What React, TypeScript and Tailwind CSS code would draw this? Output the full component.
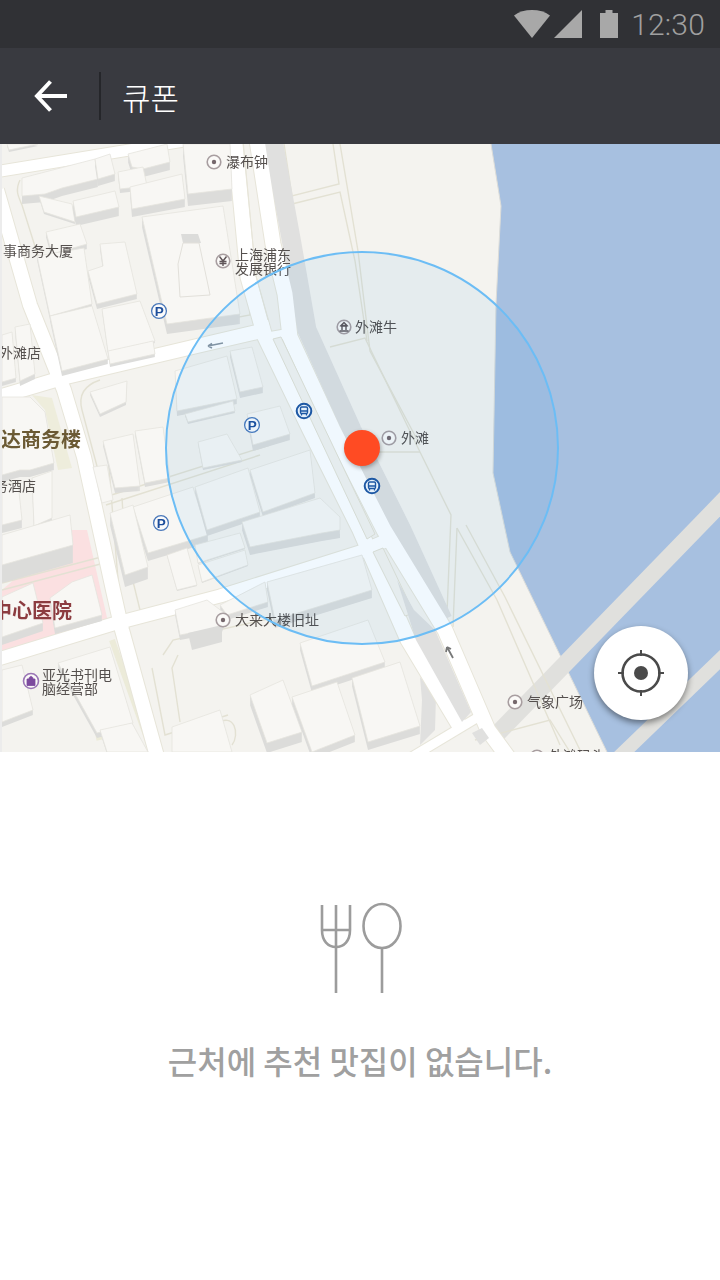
import React from "react";

type Pt = [number, number];
type Bld = { p: Pt[]; h: number };

const buildings: Bld[] = [
  { p: [[7,144],[38,144],[9,150]], h: 2 },
  { p: [[128,154],[167,144],[170,162],[143,169],[132,167]], h: 8 },
  { p: [[22,178],[95,159],[98,179],[62,188],[45,194],[22,196]], h: 8 },
  { p: [[95,159],[110,154],[115,174],[98,179]], h: 7 },
  { p: [[118,172],[143,167],[147,186],[120,189]], h: 4 },
  { p: [[130,187],[182,174],[185,199],[132,209]], h: 8 },
  { p: [[183,144],[230,144],[232,189],[188,194]], h: 12 },
  { p: [[39,196],[72,204],[75,222],[44,212]], h: 2 },
  { p: [[73,201],[115,191],[119,207],[76,217]], h: 9 },
  { p: [[46,232],[80,224],[87,244],[52,254]], h: 5 },
  { p: [[142,217],[223,206],[240,314],[167,324]], h: 10 },
  { p: [[88,271],[103,266],[100,244],[125,242],[137,294],[97,304]], h: 5 },
  { p: [[37,256],[84,248],[92,304],[50,316]], h: 4 },
  { p: [[50,316],[92,306],[108,359],[62,371]], h: 5 },
  { p: [[102,309],[140,301],[155,341],[108,352]], h: 2 },
  { p: [[108,351],[153,341],[155,354],[110,364]], h: 3 },
  { p: [[15,327],[30,324],[35,374],[20,381]], h: 5 },
  { p: [[2,335],[12,332],[16,378],[2,382]], h: 4 },
  { p: [[90,392],[127,381],[126,402],[100,414]], h: 3 },
  { p: [[175,371],[227,356],[237,399],[177,411]], h: 5 },
  { p: [[230,351],[252,347],[263,387],[240,392]], h: 6 },
  { p: [[185,414],[233,401],[235,411],[188,422]], h: 2 },
  { p: [[247,414],[280,406],[290,434],[253,445]], h: 6 },
  { p: [[198,442],[227,434],[242,460],[203,468]], h: 2 },
  { p: [[135,431],[163,427],[170,478],[145,483]], h: 4 },
  { p: [[103,441],[133,434],[140,486],[115,488]], h: 5 },
  { p: [[133,507],[193,487],[208,535],[148,553]], h: 8 },
  { p: [[110,513],[133,505],[148,567],[125,575]], h: 12 },
  { p: [[195,487],[248,468],[260,512],[207,530]], h: 6 },
  { p: [[250,470],[310,450],[315,493],[263,512]], h: 5 },
  { p: [[242,522],[320,498],[340,517],[340,530],[322,533],[250,547]], h: 8 },
  { p: [[195,545],[240,533],[245,548],[198,563]], h: 1 },
  { p: [[198,565],[245,550],[248,565],[202,582]], h: 1 },
  { p: [[167,555],[187,548],[197,585],[177,590]], h: 1 },
  { p: [[267,582],[362,555],[372,590],[275,620]], h: 8 },
  { p: [[220,605],[265,582],[268,602],[227,615]], h: 5 },
  { p: [[175,610],[207,600],[227,615],[222,627],[180,635]], h: 5 },
  { p: [[300,643],[368,620],[385,662],[312,686]], h: 7 },
  { p: [[250,695],[283,680],[302,732],[267,743]], h: 10 },
  { p: [[292,697],[337,682],[355,735],[312,752]], h: 7 },
  { p: [[352,678],[400,662],[420,726],[368,742]], h: 8 },
  { p: [[172,727],[220,710],[232,752],[172,752]], h: 2 },
  { p: [[2,397],[30,397],[45,412],[54,463],[30,470],[20,470],[2,475]], h: 7 },
  { p: [[32,478],[52,471],[52,518],[34,526]], h: 7 },
  { p: [[2,485],[18,482],[22,520],[2,525]], h: 8 },
  { p: [[2,535],[70,515],[73,545],[2,565]], h: 18 },
  { p: [[2,597],[33,583],[43,623],[2,637]], h: 8 },
  { p: [[72,582],[92,575],[102,615],[55,628],[50,598]], h: 6 },
  { p: [[2,670],[22,665],[33,710],[2,722]], h: 5 },
  { p: [[58,663],[110,647],[133,723],[97,733]], h: 5 },
  { p: [[100,730],[132,723],[148,752],[107,752]], h: 2 },
  { p: [[93,467],[107,465],[113,500],[102,503]], h: 0 },
];

const pts = (p: Pt[]) => p.map(([x, y]) => `${x},${y}`).join(" ");
const shadowPath = (p: Pt[], h: number) => {
  let d = "";
  for (let i = 1; i <= h; i++) {
    d += "M" + p.map(([x, y]) => `${x} ${y + i}`).join("L") + "Z";
  }
  return d;
};

const roads: { d: string; w: number }[] = [
  { d: "M-3 190L30 305L64 390L84 457L113 590L122 630L158 760", w: 14 },
  { d: "M-5 172L190 140", w: 11 },
  { d: "M-5 398L62 378L197 346L270 329", w: 14 },
  { d: "M-5 660L113 624L220 596L360 552L392 538", w: 13 },
  { d: "M235 140L248 277L265 337L310 430L360 530L408 640L462 730", w: 15 },
  { d: "M257 140L273 244L285 294L290 337L333 430L384 530L445 630L488 730L510 760", w: 15 },
  { d: "M262 338L296 332", w: 9 },
  { d: "M410 758L480 716", w: 9 },
];

const blockLines: string[] = [
  "M284 144L292 196L339 184L333 144",
  "M292 204L340 192L355 261L367 341",
  "M340 144L358 251L370 351L420 445",
  "M330 347L365 338L420 452L451 515L447 613",
  "M457 528L453 627",
  "M457 528L497 600L560 745",
  "M466 525L505 597L580 750",
  "M378 452L420 452",
  "M20 180C15 190 18 196 22 205L38 256",
  "M100 380C85 385 78 395 82 410L98 470",
  "M102 498L270 445",
  "M106 505L260 455",
  "M122 498L127 575",
  "M122 630L108 455",
  "M163 655L173 640L300 612L355 590",
  "M178 655L172 668L180 722",
  "M152 668L165 735L228 715",
  "M215 725C235 710 240 735 232 745",
  "M475 740L550 720L570 752",
  "M235 145L250 315L170 330",
  "M118 520L140 610",
  "M2 590L108 562",
  "M2 583L105 556",
  "M60 360L78 440",
];

const Poi = ({ x, y, glyph }: { x: number; y: number; glyph?: "bank" | "yen" }) => (
  <g>
    <circle cx={x} cy={y} r="6.8" fill="#fbfaf8" stroke="#a89ea0" strokeWidth="1.6" />
    {glyph === undefined && <circle cx={x} cy={y} r="2.2" fill="#75686c" />}
    {glyph === "yen" && (
      <path d={`M${x - 3.5} ${y - 4.5}L${x} ${y}L${x + 3.5} ${y - 4.5}M${x} ${y}V${y + 5}M${x - 3.5} ${y + 0.5}H${x + 3.5}M${x - 3.5} ${y + 2.5}H${x + 3.5}`} stroke="#5f5558" strokeWidth="1.4" fill="none" />
    )}
    {glyph === "bank" && (
      <path d={`M${x - 4.5} ${y + 4}H${x + 4.5}M${x - 3.5} ${y - 1}H${x + 3.5}M${x} ${y - 4.5}L${x - 3} ${y - 1.5}H${x + 3}ZM${x - 2} ${y - 1}V${y + 3}M${x + 2} ${y - 1}V${y + 3}`} stroke="#5f5558" strokeWidth="1.4" fill="none" />
    )}
  </g>
);

const Parking = ({ x, y }: { x: number; y: number }) => (
  <g>
    <circle cx={x} cy={y} r="7.4" fill="#fbfbfb" stroke="#4a78ba" strokeWidth="1.3" />
    <text x={x + 0.2} y={y + 4.8} textAnchor="middle" fontSize="13.5" fontWeight="700" fill="#1d4e9b" fontFamily="'Liberation Sans', sans-serif">P</text>
  </g>
);

const Bus = ({ x, y }: { x: number; y: number }) => (
  <g>
    <circle cx={x} cy={y} r="7.3" fill="#f5f8fc" stroke="#1f55a0" strokeWidth="2" />
    <rect x={x - 3.5} y={y - 4} width="7" height="6.5" rx="1.2" fill="none" stroke="#1f55a0" strokeWidth="1.4" />
    <path d={`M${x - 3.5} ${y}H${x + 3.5}M${x - 2.5} ${y + 2.5}V${y + 4.5}M${x + 2.5} ${y + 2.5}V${y + 4.5}`} stroke="#1f55a0" strokeWidth="1.3" />
  </g>
);

const labelFont = "'Noto Sans CJK SC', 'Noto Sans', sans-serif";

const Label = ({ x, y, children, size = 14, fill = "#55504e", bold = false }: { x: number; y: number; children: string; size?: number; fill?: string; bold?: boolean }) => (
  <text x={x} y={y} fontSize={size} fill={fill} fontWeight={bold ? 700 : 400} fontFamily={labelFont}>
    {children}
  </text>
);

const MapDrawing = () => (
  <svg viewBox="0 144 720 608" className="block w-full h-full blur-[0.35px]" xmlns="http://www.w3.org/2000/svg">
    <rect x="0" y="144" width="720" height="608" fill="#f4f3ef" />
    <polygon points="491,144 720,144 720,752 607,752 510,552 493,473 496,304 501,206" fill="#a7c0e0" />
    <path d="M491 144L501 206L496 304L493 473L510 552L607 752" fill="none" stroke="#dcdcd8" strokeWidth="1" />
    <path d="M730 494L498 733" stroke="#e0e0dd" strokeWidth="17" fill="none" />
    <path d="M730 650L618 758" stroke="#e0e0dd" strokeWidth="14" fill="none" />

    <polygon points="2,590 72,530 87,530 108,622 2,660" fill="#fbe0e1" />
    <polygon points="32,395 52,398 72,468 58,470 45,410" fill="#eeeddc" />
    <polygon points="18,453 27,470 22,472" fill="#eeeddc" />
    <path d="M112 640L152 752" stroke="#ecebd9" strokeWidth="6" fill="none" />
    <path d="M92 700L100 740" stroke="#ecebd9" strokeWidth="7" fill="none" />

    {blockLines.map((d, i) => (
      <path key={i} d={d} fill="none" stroke="#e3e1d3" strokeWidth="1.4" />
    ))}

    <polygon points="420,677 436,697 435,730 420,745 422,700" fill="#e0e0df" />

    {roads.map((r, i) => (
      <path key={i} d={r.d} fill="none" stroke="#e7e5d9" strokeWidth={r.w + 2} strokeLinejoin="round" />
    ))}

    <path d="M273 140L292 244L307 330L352 430L402 530L443 620" fill="none" stroke="#e0e0df" strokeWidth="19" />

    {roads.map((r, i) => (
      <path key={i} d={r.d} fill="none" stroke="#ffffff" strokeWidth={r.w} strokeLinejoin="round" />
    ))}

    <polygon points="273,339 281,337 375,534 367,539" fill="#f4f3ef" stroke="#e3e1d3" strokeWidth="1" />
    <polygon points="373,552 383,548 414,613 405,616" fill="#f4f3ef" stroke="#e3e1d3" strokeWidth="1" />
    <polygon points="397,580 414,610 435,630 471,712 462,722 416,640" fill="#e0e0df" />
    <polygon points="472,733 482,728 489,738 480,745" fill="#e0e0df" />
    <path d="M243 144L256 276L268 320" fill="none" stroke="#e7e5d9" strokeWidth="1" />

    {buildings.map((b, i) => (
      <g key={i}>
        {b.h > 0 && <path d={shadowPath(b.p, b.h)} fill="#dcdcda" />}
        <polygon points={pts(b.p)} fill="#f8f7f4" stroke="#e6e4de" strokeWidth="0.8" />
      </g>
    ))}
    <polygon points="181,234 198,234 201,243 183,243" fill="#dcdcda" />
    <polygon points="183,243 199,243 208,285 210,295 180,297 178,264" fill="none" stroke="#e2e0da" strokeWidth="1" />
    <polygon points="188,633 222,625 222,642 192,650" fill="#dcdcda" />

    <path d="M223 343L208 346M208 346L212 343.5M208 346L212 348" stroke="#8a95a0" strokeWidth="1.5" fill="none" />
    <path d="M453 658L447 647M447 647L446 652M447 647L451 649" stroke="#777878" strokeWidth="1.8" fill="none" />

    <Poi x={214} y={162} />
    <Label x={226} y={167}>瀑布钟</Label>
    <Label x={3} y={256}>事商务大厦</Label>
    <Poi x={223} y={261} glyph="yen" />
    <Label x={235} y={260}>上海浦东</Label>
    <Label x={235} y={274}>发展银行</Label>
    <Label x={-1} y={358}>外滩店</Label>
    <Poi x={344} y={327} glyph="bank" />
    <Label x={355} y={332}>外滩牛</Label>
    <Poi x={389} y={438} />
    <Label x={401} y={443}>外滩</Label>
    <Label x={1} y={447} size={20} fill="#6b5a34" bold>达商务楼</Label>
    <Label x={-6} y={491}>务酒店</Label>
    <Label x={-8} y={618} size={20} fill="#8c3c40" bold>中心医院</Label>
    <Poi x={223} y={620} />
    <Label x={235} y={625}>大来大楼旧址</Label>
    <circle cx={31} cy={681} r="7.5" fill="#fbfaf8" stroke="#9a75b5" strokeWidth="1.6" />
    <path d="M27 679H35V685.5H27ZM29 679C29 675.5 33 675.5 33 679" fill="#7c4a9e" stroke="#7c4a9e" strokeWidth="0.8" />
    <Label x={42} y={680}>亚光书刊电</Label>
    <Label x={42} y={694}>脑经营部</Label>
    <Poi x={515} y={702} />
    <Label x={527} y={707}>气象广场</Label>
    <Poi x={537} y={757} />
    <Label x={549} y={761}>外滩码头</Label>

    <Parking x={159} y={311} />
    <Parking x={252} y={425} />
    <Parking x={161} y={523} />
    <Bus x={304} y={411} />
    <Bus x={372} y={486} />

    <circle cx="362" cy="448" r="196" fill="#0090f0" fillOpacity="0.06" stroke="#6cbdf5" strokeWidth="2" />
    <rect x="0" y="144" width="2" height="608" fill="#ececec" />
  </svg>
);

export default function App() {
  return (
    <div className="w-[720px] h-[1280px] flex flex-col bg-white overflow-hidden font-['Noto_Sans_CJK_KR','Noto_Sans',sans-serif]">
      <div className="h-12 shrink-0 bg-[#303135] flex items-center justify-end pr-[15px]">
        <svg width="36" height="28" viewBox="0 0 36 28" className="mr-1">
          <path d="M0 5.5C5 1.8 11 0 18 0C25 0 31 1.8 36 5.5L18 28Z" fill="#a8a8a8" />
        </svg>
        <svg width="28" height="28" viewBox="0 0 28 28" className="mr-[18px]">
          <path d="M28 0V28H0Z" fill="#a8a8a8" />
        </svg>
        <svg width="18" height="28" viewBox="0 0 18 28" className="mr-[13px]">
          <path d="M5.5 0H12.5V3H18V28H0V3H5.5Z" fill="#a8a8a8" />
        </svg>
        <span className="mt-[2px] font-['Roboto',sans-serif] font-light text-[30px] leading-none tracking-[0.2px] text-[#a0a0a0]">12:30</span>
      </div>

      <div className="h-24 shrink-0 bg-[#393a40] flex items-center">
        <div className="w-[99px] flex justify-center pl-[2px]">
          <svg width="34" height="32" viewBox="0 0 34 32" fill="none" stroke="#ffffff" strokeWidth="4">
            <path d="M33 16H4" />
            <path d="M16.5 1.5L3 16L16.5 30.5" />
          </svg>
        </div>
        <div className="w-[2px] h-12 bg-[#25262a]" />
        <span className="ml-[21px] text-[31px] leading-none font-light text-white">큐폰</span>
      </div>

      <div className="relative h-[608px] shrink-0 overflow-hidden">
        <MapDrawing />
        <div className="absolute left-[344px] top-[286px] w-9 h-9 rounded-full bg-[#ff4b23] shadow-[1px_2px_4px_rgba(0,0,0,0.3)]" />
        <div className="absolute left-[594px] top-[482px] w-[94px] h-[94px] rounded-full bg-white flex items-center justify-center shadow-[0_3px_6px_rgba(0,0,0,0.45)]">
          <svg width="46" height="46" viewBox="0 0 46 46" fill="none" stroke="#4a4a4a">
            <circle cx="23" cy="23" r="18.5" strokeWidth="2.6" />
            <circle cx="23" cy="23" r="7" fill="#4a4a4a" stroke="none" />
            <path d="M23 0V6M23 40V46M0 23H6M40 23H46" strokeWidth="2" />
          </svg>
        </div>
      </div>

      <div className="flex flex-col items-center pt-[149px]">
        <svg width="84" height="94" viewBox="0 0 84 94" fill="none" stroke="#9c9c9c" strokeWidth="2.6" className="ml-[2px]">
          <path d="M3 4V29C3 40 9 46 17 46C25 46 31 40 31 29V4" />
          <path d="M17 4V92M3 29H31" />
          <ellipse cx="63" cy="25" rx="18.5" ry="22" />
          <path d="M63 47V92" />
        </svg>
        <p className="mt-[42px] text-[32px] leading-[46px] font-medium text-[#a0a0a0] whitespace-nowrap">근처에 추천 맛집이 없습니다.</p>
      </div>
    </div>
  );
}
